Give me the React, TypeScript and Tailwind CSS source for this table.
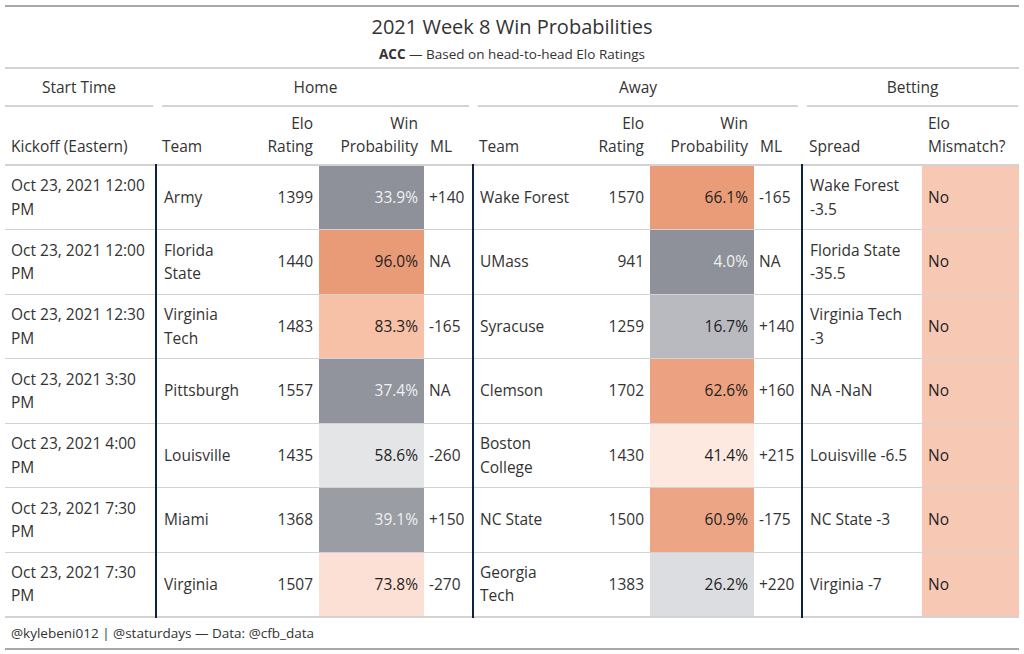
import React from 'react';

type Game = {
  kickoff: string;
  home: string;
  homeElo: number;
  homeWp: string;
  homeBg: string;
  homeLight?: boolean;
  homeMl: string;
  away: string;
  awayElo: number;
  awayWp: string;
  awayBg: string;
  awayLight?: boolean;
  awayMl: string;
  spread: string;
  mismatch: string;
};

const GAMES: Game[] = [
  { kickoff: 'Oct 23, 2021 12:00 PM', home: 'Army', homeElo: 1399, homeWp: '33.9%', homeBg: 'bg-[#8e9199]', homeLight: true, homeMl: '+140', away: 'Wake Forest', awayElo: 1570, awayWp: '66.1%', awayBg: 'bg-[#ea9c78]', awayMl: '-165', spread: 'Wake Forest -3.5', mismatch: 'No' },
  { kickoff: 'Oct 23, 2021 12:00 PM', home: 'Florida State', homeElo: 1440, homeWp: '96.0%', homeBg: 'bg-[#e99b77]', homeMl: 'NA', away: 'UMass', awayElo: 941, awayWp: '4.0%', awayBg: 'bg-[#8e9199]', awayLight: true, awayMl: 'NA', spread: 'Florida State -35.5', mismatch: 'No' },
  { kickoff: 'Oct 23, 2021 12:30 PM', home: 'Virginia Tech', homeElo: 1483, homeWp: '83.3%', homeBg: 'bg-[#f6c1a6]', homeMl: '-165', away: 'Syracuse', awayElo: 1259, awayWp: '16.7%', awayBg: 'bg-[#b8bac0]', awayMl: '+140', spread: 'Virginia Tech -3', mismatch: 'No' },
  { kickoff: 'Oct 23, 2021 3:30 PM', home: 'Pittsburgh', homeElo: 1557, homeWp: '37.4%', homeBg: 'bg-[#91949c]', homeLight: true, homeMl: 'NA', away: 'Clemson', awayElo: 1702, awayWp: '62.6%', awayBg: 'bg-[#eca280]', awayMl: '+160', spread: 'NA -NaN', mismatch: 'No' },
  { kickoff: 'Oct 23, 2021 4:00 PM', home: 'Louisville', homeElo: 1435, homeWp: '58.6%', homeBg: 'bg-[#e4e5e7]', homeMl: '-260', away: 'Boston College', awayElo: 1430, awayWp: '41.4%', awayBg: 'bg-[#fde9e0]', awayMl: '+215', spread: 'Louisville -6.5', mismatch: 'No' },
  { kickoff: 'Oct 23, 2021 7:30 PM', home: 'Miami', homeElo: 1368, homeWp: '39.1%', homeBg: 'bg-[#9a9da4]', homeLight: true, homeMl: '+150', away: 'NC State', awayElo: 1500, awayWp: '60.9%', awayBg: 'bg-[#eda685]', awayMl: '-175', spread: 'NC State -3', mismatch: 'No' },
  { kickoff: 'Oct 23, 2021 7:30 PM', home: 'Virginia', homeElo: 1507, homeWp: '73.8%', homeBg: 'bg-[#fde0d5]', homeMl: '-270', away: 'Georgia Tech', awayElo: 1383, awayWp: '26.2%', awayBg: 'bg-[#dcdde0]', awayMl: '+220', spread: 'Virginia -7', mismatch: 'No' }
];

const navy = 'border-l-2 border-l-[#0b2344]';

// spanner over a group of columns, underline is inset a few px on each side
const Spanner = ({ label, span, pad }: { label: string; span: number; pad: string }) => (
  <th colSpan={span} className={`${pad} pt-[7px] font-normal`}>
    <div className="border-b-2 border-[#d3d3d3] pb-[6px] text-center">{label}</div>
  </th>
);

const th = 'px-[6px] pt-[5px] pb-[6px] font-normal align-bottom';

export default function App() {
  return (
    <div className="bg-white w-[1024px] h-[654px] pt-[5px] px-[5px] text-[#333333] font-['Open_Sans',sans-serif] text-[15.5px]">
      <table className="table-fixed w-[1014px] border-collapse">
        <colgroup>
          <col className="w-[151px]" />
          <col className="w-[94px]" />
          <col className="w-[69px]" />
          <col className="w-[105px]" />
          <col className="w-[49px]" />
          <col className="w-[105px]" />
          <col className="w-[72px]" />
          <col className="w-[104px]" />
          <col className="w-[48px]" />
          <col className="w-[120px]" />
          <col className="w-[97px]" />
        </colgroup>
        <thead>
          <tr className="border-t-2 border-[#a8a8a8]">
            <th colSpan={11} className="pt-[7px] pb-[3px] font-normal border-b-2 border-[#d3d3d3]">
              <div className="text-[20px] leading-[26px]">2021 Week 8 Win Probabilities</div>
              <div className="text-[13.5px] leading-[20px] mt-[4px]">
                <span className="font-bold">ACC</span> — Based on head-to-head Elo Ratings
              </div>
            </th>
          </tr>
          <tr>
            <Spanner label="Start Time" span={1} pad="pl-0 pr-[3px]" />
            <Spanner label="Home" span={4} pad="pl-[6px] pr-[4px]" />
            <Spanner label="Away" span={4} pad="pl-[5px] pr-[4px]" />
            <Spanner label="Betting" span={2} pad="pl-[5px] pr-[1px]" />
          </tr>
          <tr className="border-b-2 border-[#d3d3d3] leading-[23px]">
            <th className={`${th} text-left`}>Kickoff (Eastern)</th>
            <th className={`${th} text-left`}>Team</th>
            <th className={`${th} text-right`}>Elo Rating</th>
            <th className={`${th} text-right`}>Win Probability</th>
            <th className={`${th} text-left`}>ML</th>
            <th className={`${th} text-left`}>Team</th>
            <th className={`${th} text-right`}>Elo Rating</th>
            <th className={`${th} text-right`}>Win Probability</th>
            <th className={`${th} text-left`}>ML</th>
            <th className={`${th} text-left pl-[7px]`}>Spread</th>
            <th className={`${th} text-left`}>Elo Mismatch?</th>
          </tr>
        </thead>
        <tbody className="leading-[23.5px]">
          {GAMES.map((g, i) => (
            <tr key={i} className="h-[64.5px] border-b border-[#d3d3d3]">
              <td className="px-[6px] py-[8px]">{g.kickoff}</td>
              <td className={`pl-[7px] pr-[6px] py-[8px] ${navy}`}>{g.home}</td>
              <td className="px-[6px] py-[8px] text-right">{g.homeElo}</td>
              <td className={`px-[6px] py-[8px] text-right ${g.homeBg} ${g.homeLight ? 'text-[#f0f0f0]' : 'text-[#1f1f1f]'}`}>{g.homeWp}</td>
              <td className="px-[5px] py-[8px]">{g.homeMl}</td>
              <td className={`px-[6px] py-[8px] ${navy}`}>{g.away}</td>
              <td className="px-[6px] py-[8px] text-right">{g.awayElo}</td>
              <td className={`px-[6px] py-[8px] text-right ${g.awayBg} ${g.awayLight ? 'text-[#f0f0f0]' : 'text-[#1f1f1f]'}`}>{g.awayWp}</td>
              <td className="px-[5px] py-[8px]">{g.awayMl}</td>
              <td className={`pl-[7px] pr-[6px] py-[8px] ${navy}`}>{g.spread}</td>
              <td className="px-[6px] py-[8px] bg-[#f7c9b4] text-[#1f1f1f]">{g.mismatch}</td>
            </tr>
          ))}
        </tbody>
        <tfoot>
          <tr className="border-t-2 border-b-2 border-t-[#d3d3d3] border-b-[#a8a8a8]">
            <td colSpan={11} className="px-[6px] pt-[6px] pb-[6px] text-[13.5px] leading-[18px]">
              @kylebeni012 | @staturdays — Data: @cfb_data
            </td>
          </tr>
        </tfoot>
      </table>
    </div>
  );
}
